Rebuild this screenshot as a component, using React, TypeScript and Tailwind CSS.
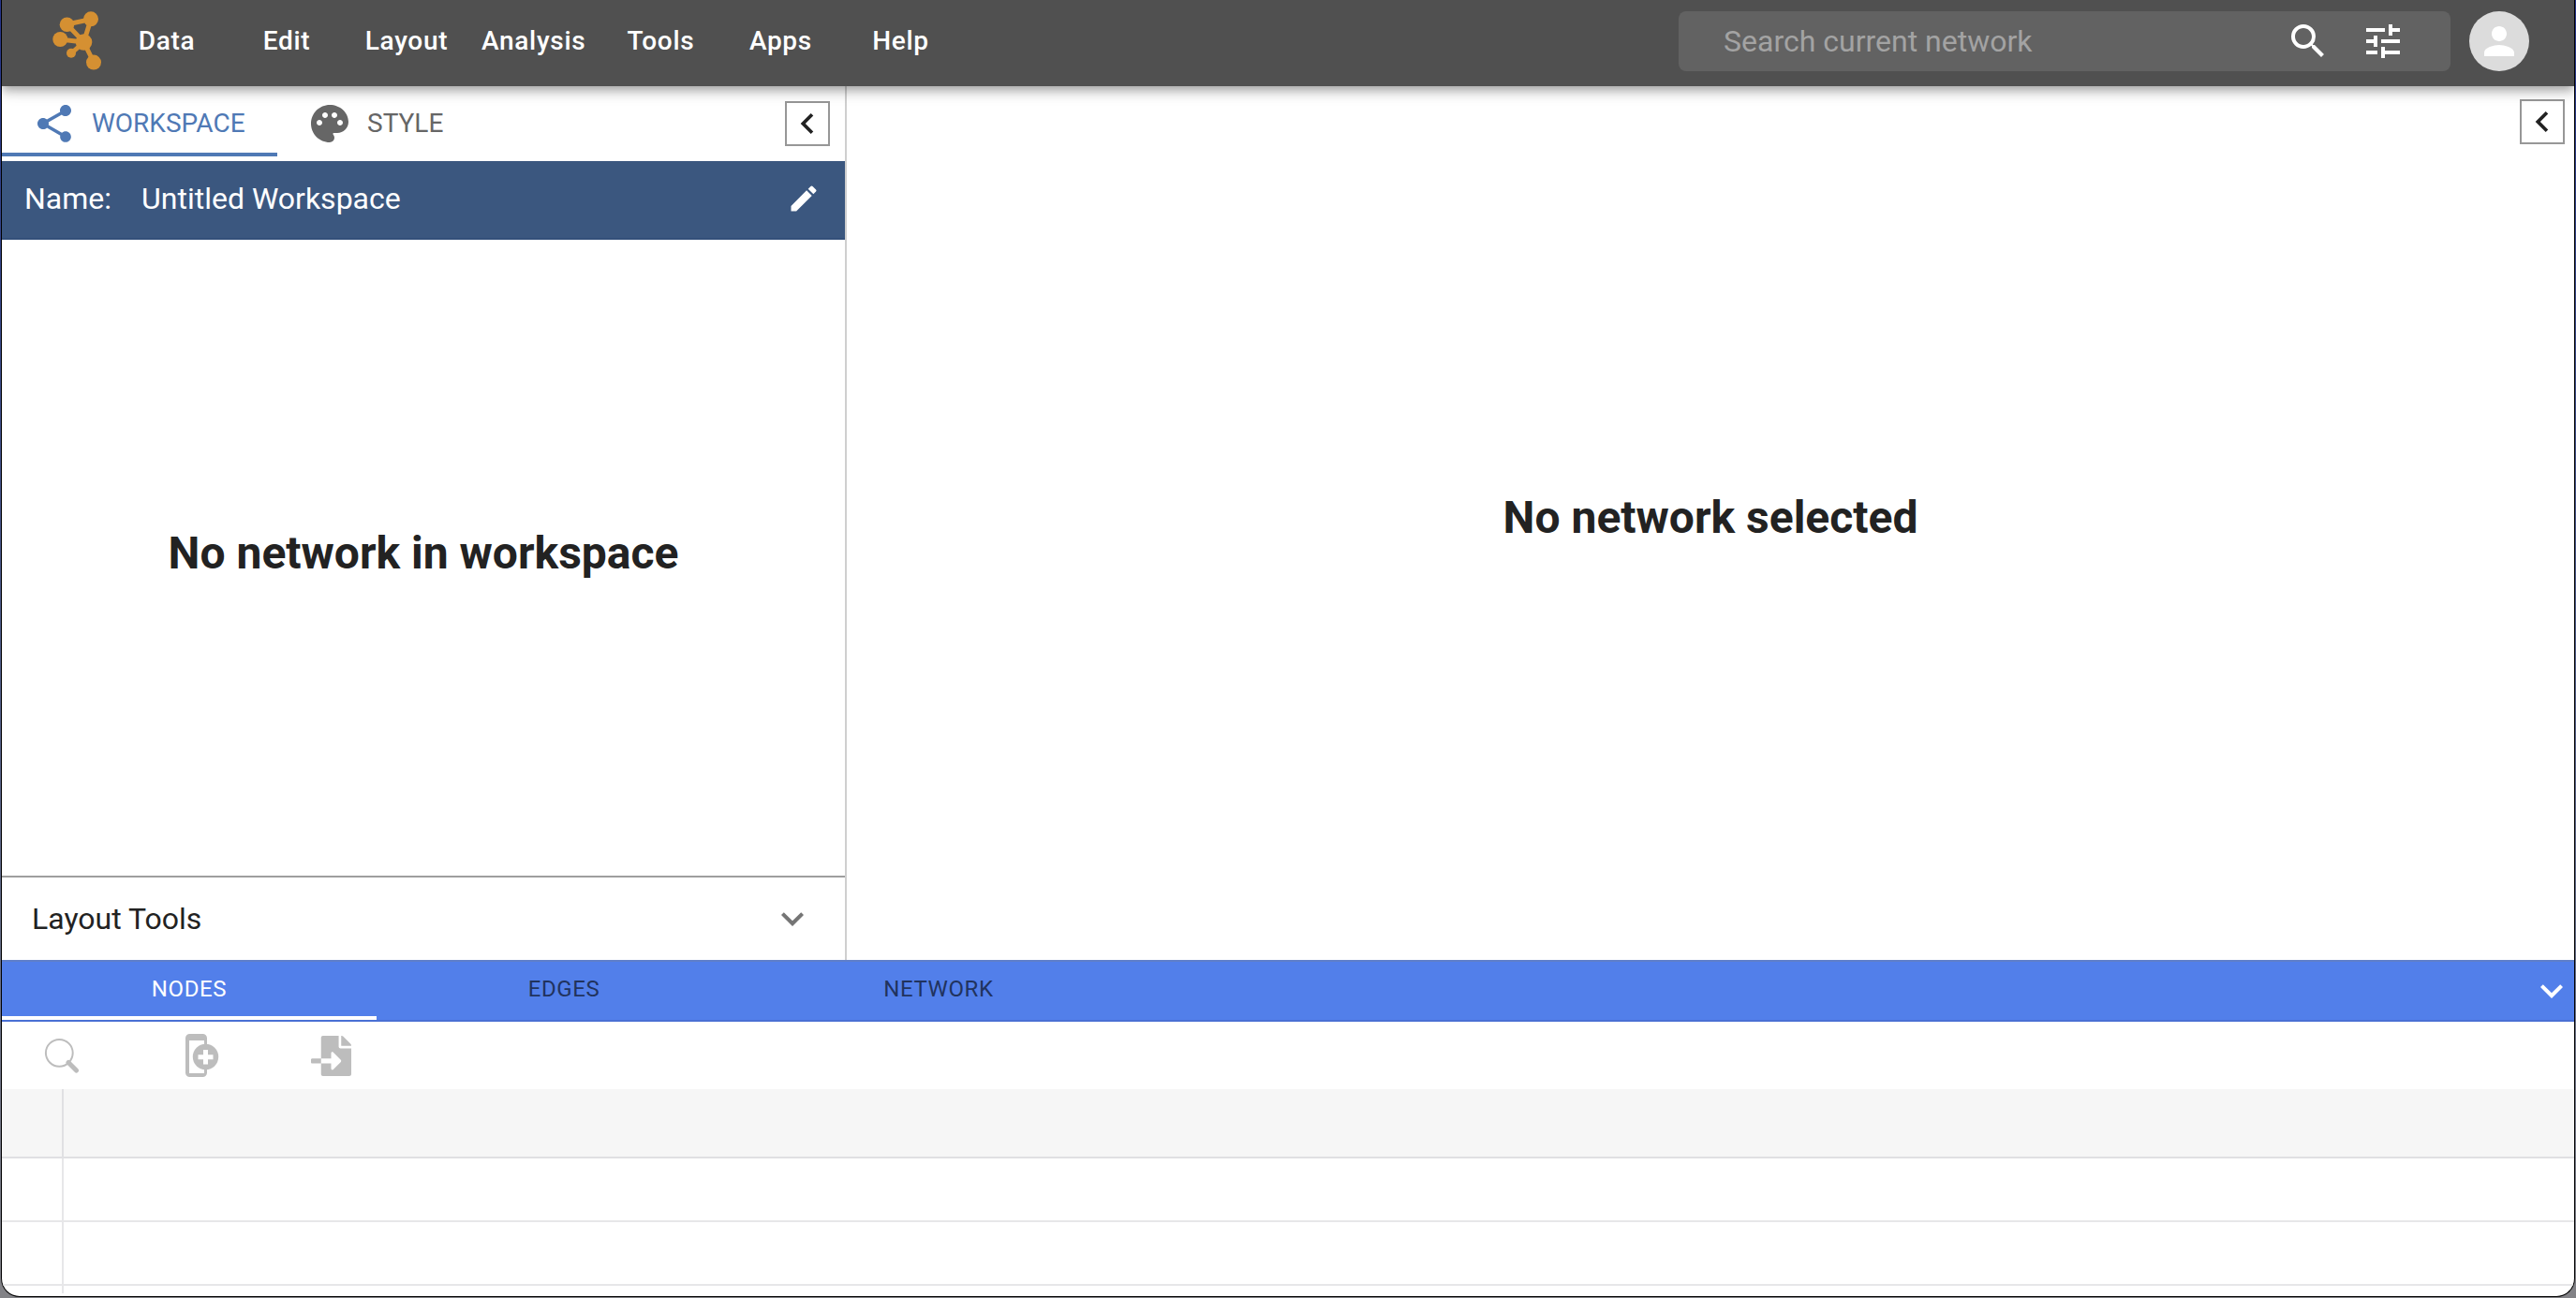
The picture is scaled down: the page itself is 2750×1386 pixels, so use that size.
import React from "react";
import { FaFileImport } from "react-icons/fa";
import {
  MdChevronLeft,
  MdEdit,
  MdExpandMore,
  MdPalette,
  MdPerson,
  MdSearch,
  MdShare,
  MdTune,
} from "react-icons/md";

const menus = ["Data", "Edit", "Layout", "Analysis", "Tools", "Apps", "Help"];
const tableTabs = ["NODES", "EDGES", "NETWORK"];

function Logo() {
  return (
    <svg viewBox="56 12 52 66" className="h-[66px] w-[52px]" fill="#d59032" stroke="#d59032" aria-hidden="true">
      <g strokeWidth="5" fill="none">
        <path d="M71.5 27 97 21.5 89.5 46Z" />
        <path d="M64 43 89.5 46 76 58M89.5 46 100 67.5" />
      </g>
      <g stroke="none">
        <circle cx="71.5" cy="27.3" r="7.8" />
        <circle cx="97" cy="21.3" r="8" />
        <circle cx="64.3" cy="43" r="8" />
        <circle cx="89.5" cy="46" r="8.8" />
        <circle cx="76" cy="57.8" r="5" />
        <circle cx="100" cy="67.6" r="8" />
      </g>
    </svg>
  );
}

function FindIcon() {
  return (
    <svg viewBox="0 0 38 38" className="size-[38px]" fill="none" stroke="#bdbdbd" aria-hidden="true">
      <circle cx="16.3" cy="16.3" r="14.4" strokeWidth="2" />
      <path d="m26 26.500 8.500 8.500" strokeWidth="5" strokeLinecap="round" />
    </svg>
  );
}

function AddColumnIcon() {
  return (
    <svg viewBox="0 0 36 46" className="h-[46px] w-9" aria-hidden="true">
      <path
        fill="#bdbdbd"
        fillRule="evenodd"
        d="M4.500 0h14a4.500 4.500 0 0 1 4.500 4.500v37a4.500 4.500 0 0 1-4.500 4.500h-14A4.500 4.500 0 0 1 0 41.500v-37A4.500 4.500 0 0 1 4.500 0ZM4 7v35h16V7Z"
      />
      <circle cx="21.500" cy="24.500" r="13.700" fill="#bdbdbd" />
      <path d="M21.500 17v15.500M13.500 24.700h16" stroke="#fff" strokeWidth="5" />
    </svg>
  );
}

function CollapseButton({ label }: { label: string }) {
  return (
    <button
      aria-label={label}
      className="flex size-12 items-center justify-center border-2 border-[#979797] bg-white text-[#222]"
    >
      <MdChevronLeft className="size-11 shrink-0" />
    </button>
  );
}

export default function App() {
  return (
    <div className="flex min-h-screen flex-col bg-linear-to-b from-[#26348a] to-[#828286] px-px pb-px font-[Roboto,sans-serif] text-[#222]">
      <div className="flex flex-1 flex-col overflow-hidden rounded-b-[20px] border border-t-0 border-black bg-white">
        <header className="relative z-10 flex h-[92px] items-center bg-[#505050] pr-12 pb-1 pl-[54px] text-white shadow-[0_4px_8px_-2px_rgba(0,0,0,0.2),0_8px_10px_0_rgba(0,0,0,0.14),0_2px_20px_0_rgba(0,0,0,0.12)]">
          <Logo />
          <nav className="ml-1.5 flex">
            {menus.map((m) => (
              <button key={m} className="h-16 min-w-32 px-4 text-[28px] font-medium tracking-wide">
                {m}
              </button>
            ))}
          </nav>
          <form className="ml-auto flex h-16 w-[824px] items-center rounded-lg bg-[#626262] pr-12">
            <input
              type="text"
              aria-label="Search current network"
              placeholder="Search current network"
              className="min-w-0 flex-1 bg-transparent pl-12 text-[32px] outline-none placeholder:text-[#a3a3a3]"
            />
            <button type="button" aria-label="Search">
              <MdSearch className="size-12" />
            </button>
            <button type="button" aria-label="Search options" className="ml-8">
              <MdTune className="size-12" />
            </button>
          </form>
          <button
            aria-label="Account"
            className="ml-5 flex size-16 items-center justify-center rounded-full bg-[#dcdcdc]"
          >
            <MdPerson className="size-12" />
          </button>
        </header>

        <main className="flex flex-1">
          <aside className="flex w-[32.85%] flex-col border-r-2 border-[#cfcfcf]">
            <div className="flex h-20 items-center pr-4">
              <div role="tablist" className="flex">
                <button
                  role="tab"
                  aria-selected="true"
                  className="flex h-[70px] min-w-[294px] items-center gap-4 border-b-4 border-[#4f79b5] px-8 pt-1 text-[28px] text-[#4f79b5]"
                >
                  <MdShare className="size-12" />
                  WORKSPACE
                </button>
                <button
                  role="tab"
                  aria-selected="false"
                  className="flex h-[70px] items-center gap-4 px-8 text-[28px] text-[#666]"
                >
                  <MdPalette className="size-12" />
                  STYLE
                </button>
              </div>
              <div className="ml-auto">
                <CollapseButton label="Collapse left panel" />
              </div>
            </div>
            <div className="flex h-[84px] items-center border-b-2 border-[#34507a] bg-[#3b577f] pr-[26px] pb-0.5 pl-6 text-[32px] text-white">
              <span>Name:</span>
              <span className="ml-8">Untitled Workspace</span>
              <button aria-label="Rename workspace" className="ml-auto">
                <MdEdit className="size-9" />
              </button>
            </div>
            <div className="flex flex-1 items-center justify-center pb-2.5">
              <h2 className="text-[48px] font-bold">No network in workspace</h2>
            </div>
            <button className="flex h-[90px] items-center border-t-2 border-[#9f9f9f] px-8 text-[32px]">
              Layout Tools
              <MdExpandMore className="ml-auto size-12 text-[#757575]" />
            </button>
          </aside>
          <section className="flex flex-1 flex-col">
            <div className="flex justify-end px-2.5 pt-[14px]">
              <CollapseButton label="Show right panel" />
            </div>
            <div className="flex flex-1 items-center justify-center pb-[74px]">
              <h2 className="text-[48px] font-bold">No network selected</h2>
            </div>
          </section>
        </main>

        <section>
          <div className="flex h-[66px] items-stretch border-y-2 border-t-[#5f7fca] border-b-[#4a70d4] bg-[#527fea]">
            <div role="tablist" className="flex">
              {tableTabs.map((t, i) => (
                <button
                  key={t}
                  role="tab"
                  aria-selected={i === 0}
                  className={
                    i === 0
                      ? "w-[400px] border-b-4 border-white text-2xl tracking-wide text-white"
                      : "w-[400px] border-b-4 border-transparent text-2xl tracking-wide text-[#21335e]"
                  }
                >
                  {t}
                </button>
              ))}
            </div>
            <button aria-label="Collapse table panel" className="ml-auto text-white">
              <MdExpandMore className="size-12" />
            </button>
          </div>
          <div className="flex h-[72px] items-center pl-[45px]">
            <button aria-label="Search table">
              <FindIcon />
            </button>
            <button aria-label="Add column" className="ml-[113px]">
              <AddColumnIcon />
            </button>
            <button aria-label="Import table" className="ml-[98px]">
              <FaFileImport className="size-[43px] text-[#bdbdbd]" />
            </button>
          </div>
          <table className="mb-[3px] w-full border-separate border-spacing-0">
            <thead>
              <tr className="h-[74px] bg-[#f6f6f6]">
                <th aria-label="Row" className="w-[66px] border-r-2 border-b-2 border-[#e0e0e3]" />
                <td className="border-b-2 border-[#e0e0e2]" />
              </tr>
            </thead>
            <tbody>
              {[0, 1].map((r) => (
                <tr key={r} className="h-[68px]">
                  <td className="border-r-2 border-b-2 border-[#e7e7e9]" />
                  <td className="border-b-2 border-[#e7e7e9]" />
                </tr>
              ))}
              <tr className="h-2">
                <td className="border-r-2 border-[#e7e7e9]" />
                <td />
              </tr>
            </tbody>
          </table>
        </section>
      </div>
    </div>
  );
}
